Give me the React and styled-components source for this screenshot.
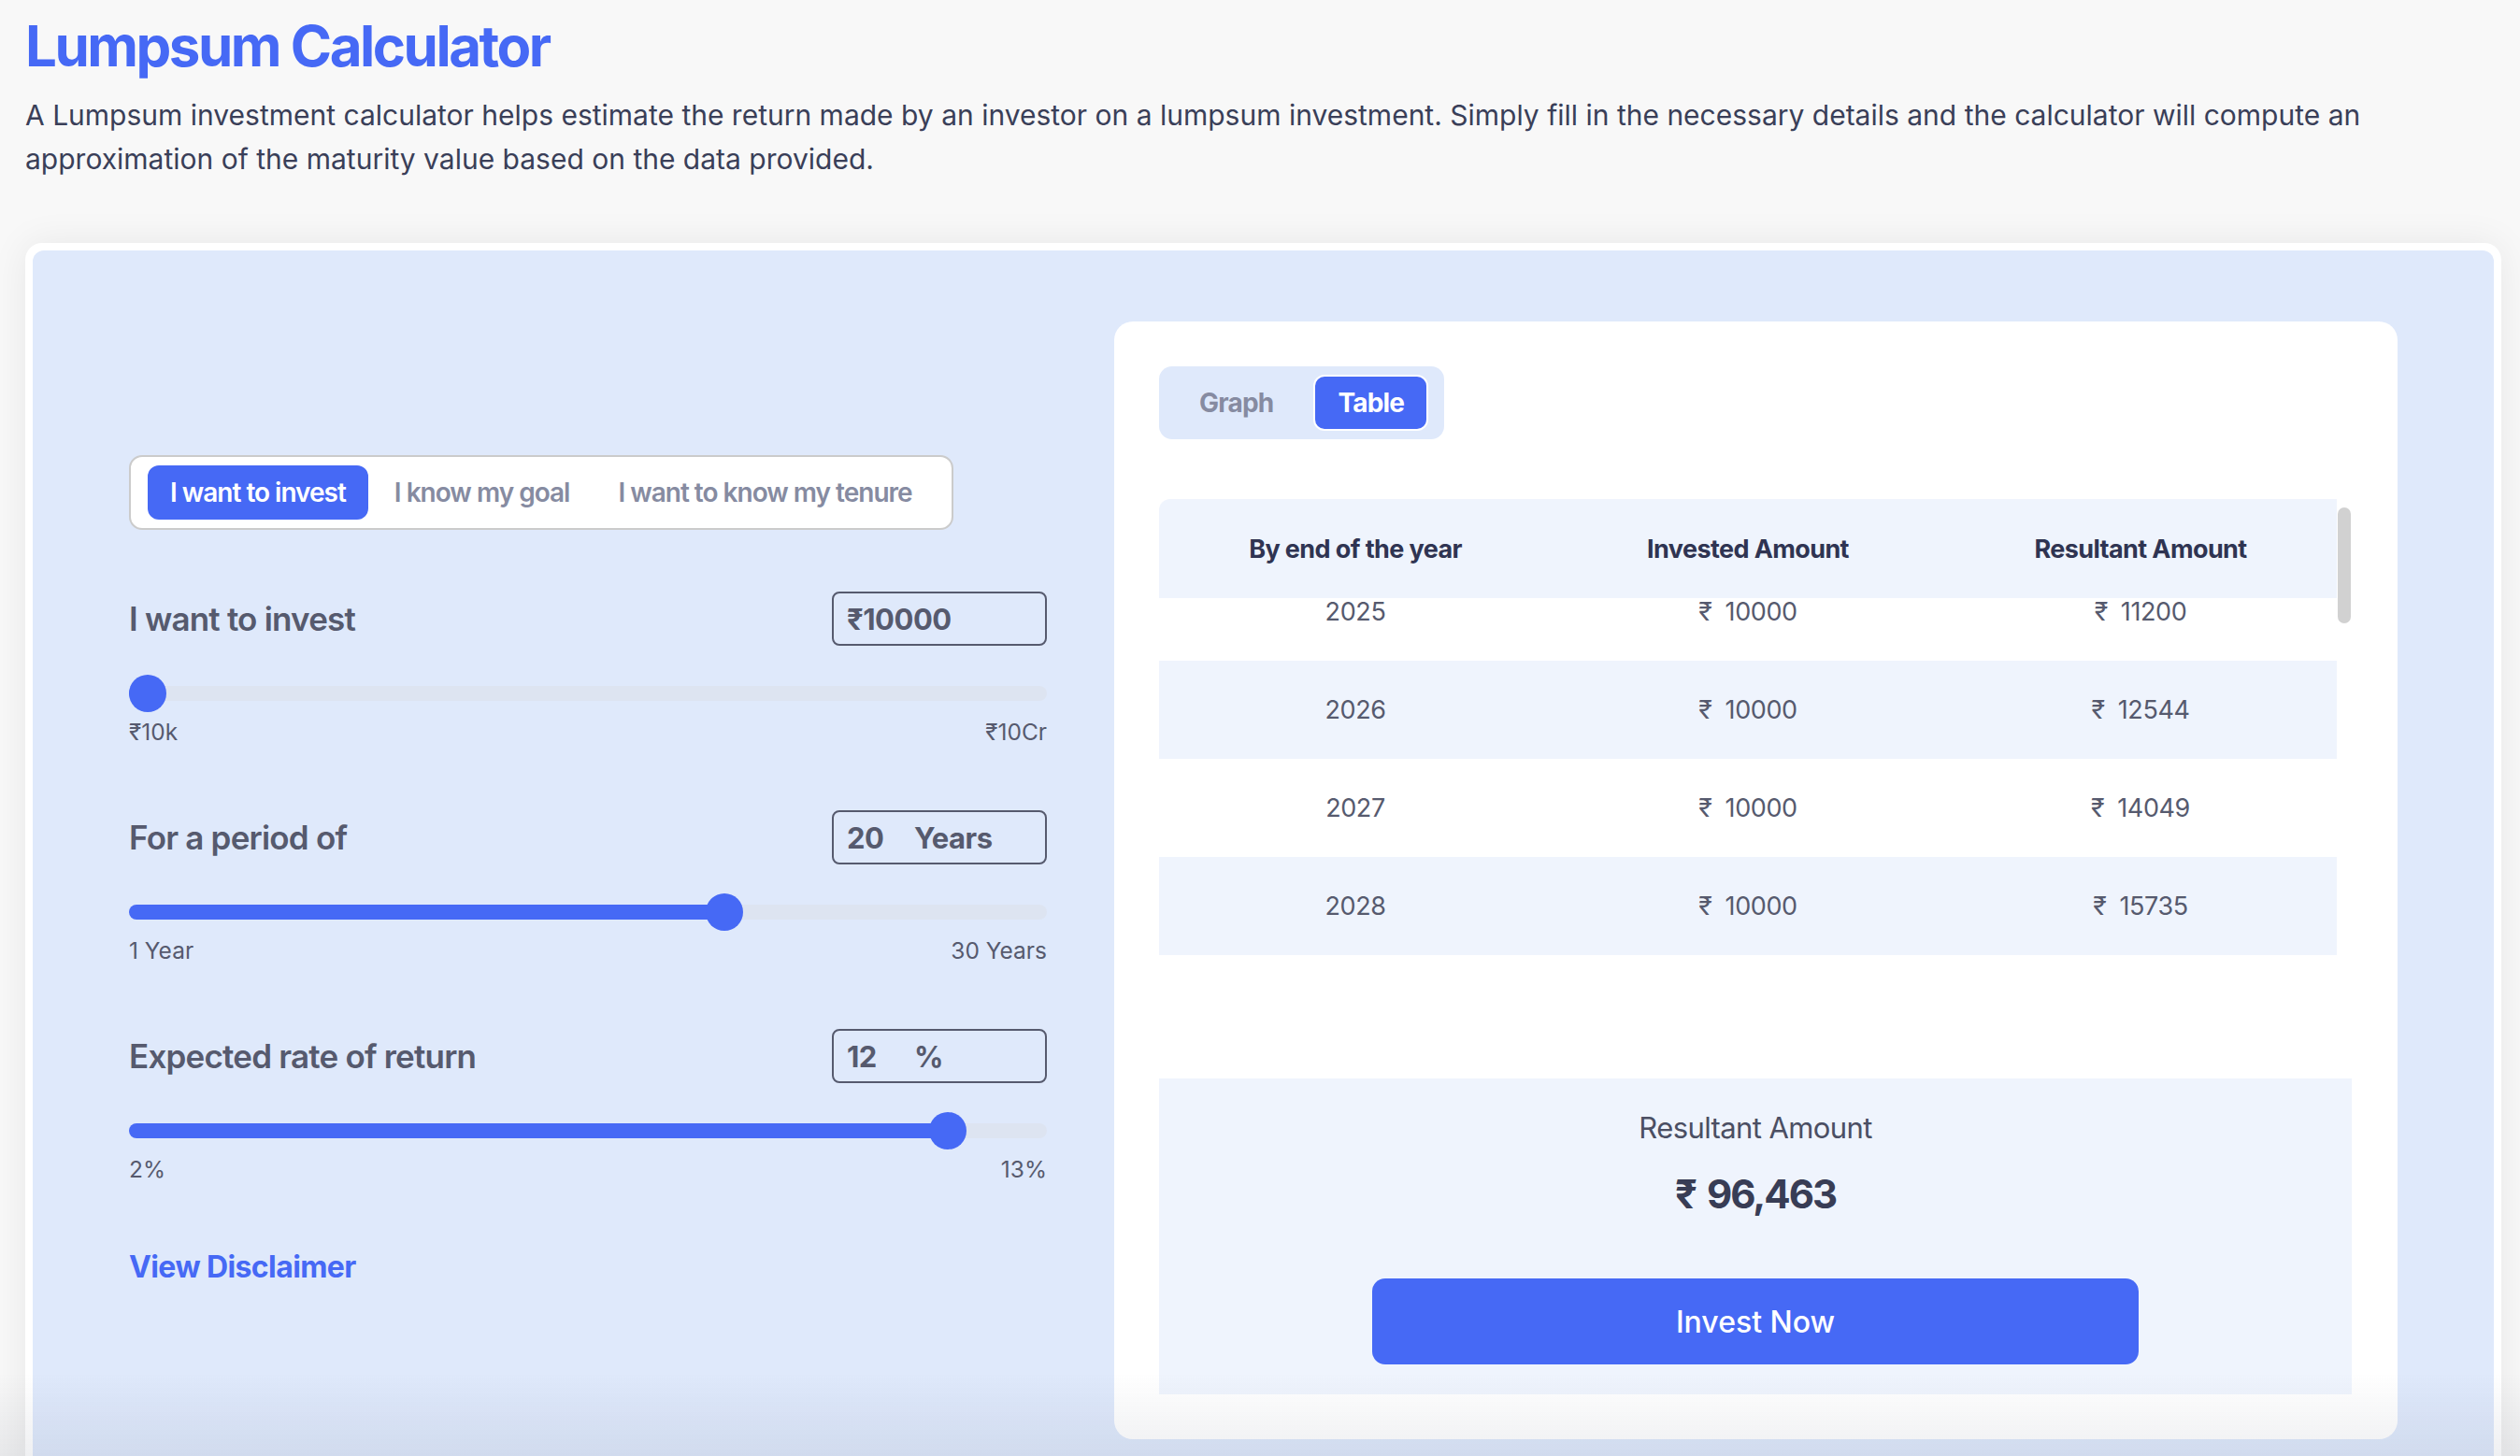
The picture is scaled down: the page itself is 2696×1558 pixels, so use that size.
import React, { useEffect, useRef, useState } from 'react'
import styled, { createGlobalStyle } from 'styled-components'

const GlobalStyle = createGlobalStyle`
  * { box-sizing: border-box; }
  body {
    margin: 0;
    background: #f8f8f8;
    font-family: Inter, "Noto Sans", "Liberation Sans", sans-serif;
  }
`

const Page = styled.div`
  padding: 13px 20px 0 27px;
`

const Title = styled.h1`
  margin: 0;
  font-size: 60px;
  line-height: 72px;
  font-weight: 700;
  color: #4669f5;
  letter-spacing: -2.5px;
`

const Intro = styled.p`
  margin: 15px 0 0;
  font-size: 30px;
  line-height: 47px;
  color: #3a3f58;
`

const Card = styled.section`
  margin-top: 66px;
  width: 2649px;
  padding: 8px;
  background: #fff;
  border-radius: 18px;
  box-shadow: 0 0 40px rgba(0, 0, 0, 0.07);
`

const Panel = styled.div`
  display: flex;
  align-items: flex-start;
  gap: 72px;
  padding: 76px 101px 90px 103px;
  background: #dfe9fb;
  border-radius: 12px;
`

const LeftCol = styled.div`
  width: 982px;
  padding-top: 143px;
  display: flex;
  flex-direction: column;
`

const ModeTabs = styled.div`
  align-self: flex-start;
  display: flex;
  gap: 4px;
  padding: 9px 18px;
  background: #fff;
  border: 2px solid #cbcbcb;
  border-radius: 14px;
`

const ModeTab = styled.button`
  height: 58px;
  padding: 0 24px;
  border: none;
  border-radius: 12px;
  font-family: inherit;
  font-size: 28px;
  font-weight: 600;
  letter-spacing: -1px;
  background: ${(p) => (p.$active ? '#4669f5' : 'transparent')};
  color: ${(p) => (p.$active ? '#fff' : '#868ba1')};
  cursor: pointer;
`

const Field = styled.div`
  margin-top: ${(p) => (p.$first ? 66 : 69)}px;
`

const FieldRow = styled.div`
  display: flex;
  justify-content: space-between;
  align-items: center;
  height: 58px;
`

const FieldLabel = styled.label`
  font-size: 35px;
  font-weight: 600;
  letter-spacing: -0.8px;
  color: #565a6e;
`

const InputBox = styled.div`
  width: 230px;
  height: 58px;
  display: flex;
  align-items: center;
  gap: 12px;
  padding: 0 14px;
  border: 2px solid #565a6e;
  border-radius: 8px;
  font-size: 31px;
  font-weight: 700;
  letter-spacing: -0.5px;
  color: #565a6e;
`

const NumberInput = styled.input`
  width: ${(p) => p.$w}px;
  padding: 0;
  border: none;
  outline: none;
  background: transparent;
  font-family: inherit;
  font-size: inherit;
  font-weight: inherit;
  letter-spacing: inherit;
  color: inherit;
`

const Prefix = styled.span`
  margin-right: -12px;
`

const Range = styled.input`
  -webkit-appearance: none;
  appearance: none;
  display: block;
  width: 100%;
  height: 16px;
  margin: 43px 0 0;
  background: transparent;

  &::-webkit-slider-runnable-track {
    height: 16px;
    border-radius: 8px;
    background: linear-gradient(to right, #4669f5 var(--fill), #dde4f1 var(--fill));
  }

  &::-webkit-slider-thumb {
    -webkit-appearance: none;
    width: 40px;
    height: 40px;
    margin-top: -12px;
    border: none;
    border-radius: 50%;
    background: #4669f5;
    cursor: pointer;
  }
`

const RangeEnds = styled.div`
  display: flex;
  justify-content: space-between;
  margin-top: 18px;
  font-size: 24.5px;
  line-height: 30px;
  color: #565a6e;
`

const Disclaimer = styled.a`
  margin-top: 70px;
  font-size: 32px;
  line-height: 40px;
  font-weight: 700;
  letter-spacing: -0.6px;
  color: #4669f5;
  text-decoration: none;
  cursor: pointer;
`

const ResultCard = styled.div`
  width: 1373px;
  padding: 48px 49px 48px 48px;
  background: #fff;
  border-radius: 20px;
`

const ViewToggle = styled.div`
  display: inline-flex;
  gap: 17px;
  padding: 9px 17px;
  background: #dfe9fb;
  border-radius: 14px;
`

const ViewBtn = styled.button`
  height: 60px;
  padding: 0 24px;
  border: 2px solid ${(p) => (p.$active ? '#fff' : 'transparent')};
  border-radius: 12px;
  background: ${(p) => (p.$active ? '#4669f5' : 'transparent')};
  color: ${(p) => (p.$active ? '#fff' : '#868ba1')};
  font-family: inherit;
  font-size: 28px;
  font-weight: 700;
  letter-spacing: -0.8px;
  cursor: pointer;
`

const TableFrame = styled.div`
  margin-top: 64px;
  height: 523px;
  display: flex;
`

const TableScroll = styled.div`
  flex: 1;
  overflow-y: auto;
  scrollbar-width: none;
  border-radius: 12px 0 0 0;

  &::-webkit-scrollbar {
    display: none;
  }
`

const ScrollGutter = styled.div`
  width: 16px;
  padding: 0 1px;
`

const ScrollThumb = styled.div`
  width: 14px;
  border-radius: 7px;
  background: #d1d1d1;
`

const Table = styled.table`
  width: 100%;
  border-collapse: collapse;
  table-layout: fixed;
`

const Th = styled.th`
  position: sticky;
  top: 0;
  height: 106px;
  padding: 0;
  background: #eff4fd;
  font-size: 27px;
  font-weight: 700;
  letter-spacing: -0.6px;
  color: #2f3452;
`

const Row = styled.tr`
  &:nth-child(even) {
    background: #eff4fd;
  }
`

const Td = styled.td`
  height: 105px;
  padding: 0;
  text-align: center;
  font-size: 27px;
  letter-spacing: -0.4px;
  color: #565a6e;
`

const Rupee = styled.span`
  margin-right: ${(p) => p.$gap}px;
`

const Summary = styled.div`
  margin-top: 97px;
  display: flex;
  flex-direction: column;
  align-items: center;
  padding: 33px 0 32px;
  background: #eff4fd;
`

const SummaryLabel = styled.div`
  font-size: 31px;
  line-height: 40px;
  letter-spacing: -0.6px;
  color: #4b4f63;
`

const SummaryValue = styled.div`
  margin-top: 25px;
  font-size: 42px;
  line-height: 52px;
  font-weight: 700;
  letter-spacing: -2px;
  color: #383d55;
`

const InvestButton = styled.button`
  margin-top: 64px;
  width: 820px;
  height: 92px;
  border: none;
  border-radius: 14px;
  background: #4669f5;
  color: #fff;
  font-family: inherit;
  font-size: 32px;
  font-weight: 500;
  cursor: pointer;
`

const BottomFade = styled.div`
  position: fixed;
  left: 0;
  right: 0;
  bottom: 0;
  height: 90px;
  pointer-events: none;
  background: linear-gradient(to bottom, rgba(30, 40, 70, 0), rgba(30, 40, 70, 0.07));
`

const fillAt = (value, min, max) => {
  const frac = (value - min) / (max - min)
  return `calc(20px + ${frac} * (100% - 40px))`
}

const Slider = ({ value, min, max, onChange }) => (
  <Range
    type="range"
    min={min}
    max={max}
    value={value}
    onChange={(e) => onChange(Number(e.target.value))}
    style={{ '--fill': fillAt(value, min, max) }}
  />
)

const LumpsumCalculator = () => {
  const [mode, setMode] = useState(0)
  const [view, setView] = useState('table')
  const [amount, setAmount] = useState(10000)
  const [years, setYears] = useState(20)
  const [rate, setRate] = useState(12)
  const [thumb, setThumb] = useState({ top: 0, height: 0 })
  const scrollRef = useRef(null)

  const updateThumb = () => {
    const el = scrollRef.current
    if (!el) return
    setThumb({
      top: (el.scrollTop / el.scrollHeight) * el.clientHeight,
      height: (el.clientHeight * el.clientHeight) / el.scrollHeight,
    })
  }

  useEffect(() => {
    if (scrollRef.current) scrollRef.current.scrollTop = 38
    updateThumb()
  }, [])

  const rows = Array.from({ length: years }, (_, i) => ({
    year: 2025 + i,
    invested: amount,
    result: Math.round(amount * Math.pow(1 + rate / 100, i + 1)),
  }))
  const total = Math.round(amount * Math.pow(1 + rate / 100, years))

  const modes = ['I want to invest', 'I know my goal', 'I want to know my tenure']

  return (
    <Page>
      <Title>Lumpsum Calculator</Title>
      <Intro>
        A Lumpsum investment calculator helps estimate the return made by an investor on a lumpsum
        investment. Simply fill in the necessary details and the calculator will compute an
        approximation of the maturity value based on the data provided.
      </Intro>

      <Card>
        <Panel>
          <LeftCol>
            <ModeTabs>
              {modes.map((m, i) => (
                <ModeTab key={m} $active={mode === i} onClick={() => setMode(i)}>
                  {m}
                </ModeTab>
              ))}
            </ModeTabs>

            <Field $first>
              <FieldRow>
                <FieldLabel>I want to invest</FieldLabel>
                <InputBox>
                  <Prefix>₹</Prefix>
                  <NumberInput $w={150} value={amount} onChange={(e) => setAmount(Number(e.target.value) || 0)} />
                </InputBox>
              </FieldRow>
              <Slider value={amount} min={10000} max={100000000} onChange={setAmount} />
              <RangeEnds>
                <span>₹10k</span>
                <span>₹10Cr</span>
              </RangeEnds>
            </Field>

            <Field>
              <FieldRow>
                <FieldLabel>For a period of</FieldLabel>
                <InputBox>
                  <NumberInput $w={60} value={years} onChange={(e) => setYears(Number(e.target.value) || 1)} />
                  <span>Years</span>
                </InputBox>
              </FieldRow>
              <Slider value={years} min={1} max={30} onChange={setYears} />
              <RangeEnds>
                <span>1 Year</span>
                <span>30 Years</span>
              </RangeEnds>
            </Field>

            <Field>
              <FieldRow>
                <FieldLabel>Expected rate of return</FieldLabel>
                <InputBox>
                  <NumberInput $w={60} value={rate} onChange={(e) => setRate(Number(e.target.value) || 0)} />
                  <span>%</span>
                </InputBox>
              </FieldRow>
              <Slider value={rate} min={2} max={13} onChange={setRate} />
              <RangeEnds>
                <span>2%</span>
                <span>13%</span>
              </RangeEnds>
            </Field>

            <Disclaimer>View Disclaimer</Disclaimer>
          </LeftCol>

          <ResultCard>
            <ViewToggle>
              <ViewBtn $active={view === 'graph'} onClick={() => setView('graph')}>Graph</ViewBtn>
              <ViewBtn $active={view === 'table'} onClick={() => setView('table')}>Table</ViewBtn>
            </ViewToggle>

            <TableFrame>
              <TableScroll ref={scrollRef} onScroll={updateThumb}>
                <Table>
                  <thead>
                    <tr>
                      <Th>By end of the year</Th>
                      <Th>Invested Amount</Th>
                      <Th>Resultant Amount</Th>
                    </tr>
                  </thead>
                  <tbody>
                    {rows.map((r) => (
                      <Row key={r.year}>
                        <Td>{r.year}</Td>
                        <Td><Rupee $gap={14}>₹</Rupee>{r.invested}</Td>
                        <Td><Rupee $gap={14}>₹</Rupee>{r.result}</Td>
                      </Row>
                    ))}
                  </tbody>
                </Table>
              </TableScroll>
              <ScrollGutter>
                <ScrollThumb style={{ marginTop: thumb.top, height: thumb.height }} />
              </ScrollGutter>
            </TableFrame>

            <Summary>
              <SummaryLabel>Resultant Amount</SummaryLabel>
              <SummaryValue><Rupee $gap={12}>₹</Rupee>{total.toLocaleString('en-IN')}</SummaryValue>
              <InvestButton>Invest Now</InvestButton>
            </Summary>
          </ResultCard>
        </Panel>
      </Card>
      <BottomFade />
    </Page>
  )
}

export default function App() {
  return (
    <>
      <GlobalStyle />
      <LumpsumCalculator />
    </>
  )
}
